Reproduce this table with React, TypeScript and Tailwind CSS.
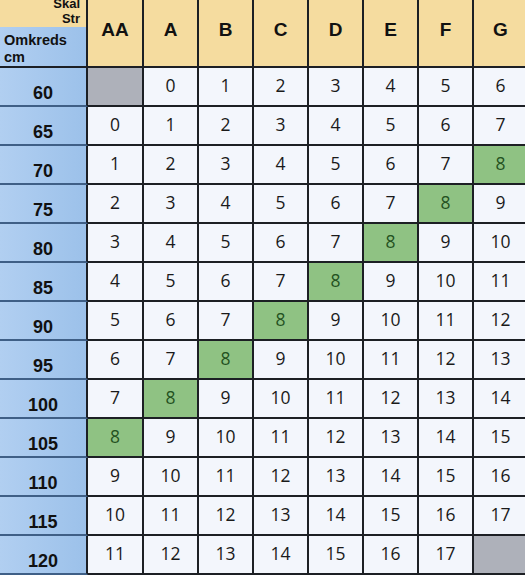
const cols = ['AA', 'A', 'B', 'C', 'D', 'E', 'F', 'G'];
const rows = [60, 65, 70, 75, 80, 85, 90, 95, 100, 105, 110, 115, 120];

function Cell({ value }: { value: number }) {
  if (value < 0 || value > 17) {
    return <div className="h-[39px] border-r-2 border-b-2 border-[#1c1f24] bg-[#aeb1ba]" />;
  }
  const green = value === 8;
  return (
    <div
      className={`h-[39px] border-r-2 border-b-2 border-[#1c1f24] flex items-center justify-center pb-[2px] text-[17.5px] ${
        green ? 'bg-[#8fc283] text-[#24521f]' : 'bg-[#f3f6fc] text-[#1a1a1a]'
      }`}
      style={{ fontFamily: '"Open Sans", sans-serif' }}
    >
      {value}
    </div>
  );
}

export default function App() {
  return (
    <div className="w-[525px] h-[575px] overflow-hidden bg-white" style={{ fontFamily: '"Liberation Sans", Arial, sans-serif' }}>
      <div className="grid grid-cols-[88px_56px_55px_55px_55px_55px_55px_55px_55px] w-[529px]">
        <div className="h-[68px] border-r-2 border-b-2 border-[#1c1f24] flex flex-col">
          <div className="h-[28px] bg-[#f5dc9f] flex flex-col items-end justify-end pr-[6px] pb-[1px] text-[13px] font-bold leading-[15px] text-[#111] overflow-hidden">
            <span>Skal</span>
            <span>Str</span>
          </div>
          <div className="flex-1 bg-gradient-to-r from-[#b1cff1] to-[#9cc1ea] pl-[4px] pt-[5px] text-[14.5px] font-bold leading-[17px] text-[#111]">
            <div>Omkreds</div>
            <div>cm</div>
          </div>
        </div>
        {cols.map((c) => (
          <div key={c} className="h-[68px] border-r-2 border-b-2 border-[#1c1f24] bg-[#f5dc9f] flex items-center justify-center pb-[6px] text-[19px] font-bold text-[#111]">
            {c}
          </div>
        ))}
        {rows.map((r, i) => (
          <div key={r} className="contents">
            <div className="h-[39px] border-r-2 border-b-2 border-r-[#1c1f24] border-b-[#3f5f86] bg-gradient-to-r from-[#b1cff1] to-[#9cc1ea] flex items-start justify-center pt-[16px] leading-none text-[18px] font-bold text-[#111]">
              {r}
            </div>
            {cols.map((c, j) => (
              <Cell key={c} value={i - 1 + j} />
            ))}
          </div>
        ))}
      </div>
    </div>
  );
}
